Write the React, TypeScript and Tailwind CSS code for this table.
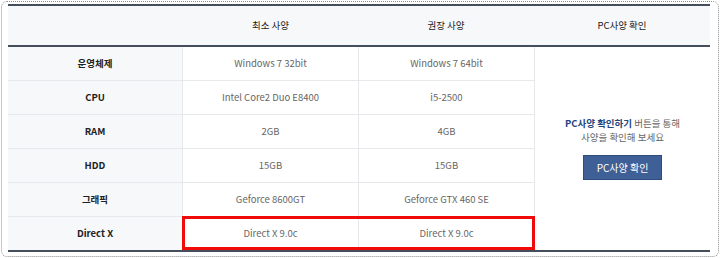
const FONT = "font-['Noto_Sans_CJK_KR','Liberation_Sans',sans-serif]";

type SpecRow = {
  label: string;
  min: string;
  rec: string;
};

const rows: SpecRow[] = [
  { label: "운영체제", min: "Windows 7 32bit", rec: "Windows 7 64bit" },
  { label: "CPU", min: "Intel Core2 Duo E8400", rec: "i5-2500" },
  { label: "RAM", min: "2GB", rec: "4GB" },
  { label: "HDD", min: "15GB", rec: "15GB" },
  { label: "그래픽", min: "Geforce 8600GT", rec: "Geforce GTX 460 SE" },
  { label: "Direct X", min: "Direct X 9.0c", rec: "Direct X 9.0c" },
];

export default function App() {
  return (
    <div className={`h-[258px] w-[720px] bg-white p-px ${FONT}`}>
      <div className="h-[256px] rounded-md border border-dotted border-[#8d8d8d] pl-[6px] pt-[2px]">
        <div className="w-[702px]">
          {/* header */}
          <div className="grid h-[43px] grid-cols-[175px_175px_176px_176px] items-center border-y-2 border-[#454e5b] bg-[#f7f8fa] text-center text-[9.5px] text-[#222]">
            <div />
            <div>최소 사양</div>
            <div>권장 사양</div>
            <div>PC사양 확인</div>
          </div>

          {/* body */}
          <div className="grid grid-cols-[175px_175px_176px_176px] grid-rows-[34px_34px_34px_34px_34px_33px] border-b-2 border-[#454e5b] text-center text-[9.5px]">
            {rows.map((row, i) => {
              const last = i === rows.length - 1;
              const line = last ? "" : "border-b border-[#e6e8eb]";
              return [
                <div
                  key={`l${i}`}
                  className={`flex items-center justify-center border-r border-[#cfd2d6] bg-[#f7f8fa] font-bold text-[#222] ${line}`}
                  style={{ gridRow: i + 1, gridColumn: 1 }}
                >
                  {row.label}
                </div>,
                last ? (
                  <div
                    key={`x${i}`}
                    className="relative grid grid-cols-[175px_176px] text-[#666]"
                    style={{ gridRow: i + 1, gridColumn: "2 / span 2" }}
                  >
                    <div className="flex items-center justify-center">{row.min}</div>
                    <div className="flex items-center justify-center border-l border-[#e6e8eb]">{row.rec}</div>
                    <div className="absolute -top-[1px] -left-[1px] -right-[1px] bottom-0 border-[3px] border-[#f00a0a]" />
                  </div>
                ) : (
                  [
                    <div
                      key={`m${i}`}
                      className={`flex items-center justify-center text-[#666] ${line}`}
                      style={{ gridRow: i + 1, gridColumn: 2 }}
                    >
                      {row.min}
                    </div>,
                    <div
                      key={`r${i}`}
                      className={`flex items-center justify-center border-l border-[#e6e8eb] text-[#666] ${line}`}
                      style={{ gridRow: i + 1, gridColumn: 3 }}
                    >
                      {row.rec}
                    </div>,
                  ]
                ),
              ];
            })}
            <div className="col-start-4 row-span-6 row-start-1 flex flex-col items-center justify-center border-l border-[#e6e8eb] pb-[2px]">
              <p className="leading-[14px] text-[#666]">
                <span className="font-bold text-[#24467c]">PC사양 확인하기</span> 버튼을 통해
                <br />
                사양을 확인해 보세요
              </p>
              <button
                type="button"
                className="mt-[11px] h-[25px] w-[79px] border border-[#2f4c7e] bg-[#3f5f97] text-[10px] text-white"
              >
                PC사양 확인
              </button>
            </div>
          </div>
        </div>
      </div>
    </div>
  );
}
